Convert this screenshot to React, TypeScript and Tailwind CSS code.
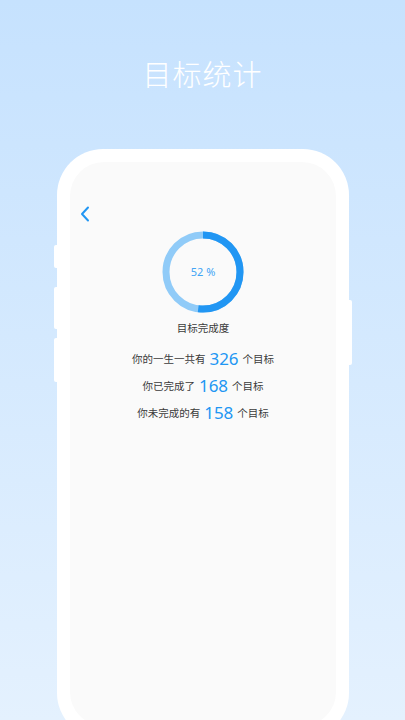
import React from "react";

const font = { fontFamily: '"Noto Sans CJK SC", "Noto Sans", sans-serif' };

function Ring({ pct }: { pct: number }) {
  const r = 37;
  const c = 2 * Math.PI * r;
  return (
    <svg width="88" height="88" viewBox="0 0 88 88">
      <circle cx="44" cy="44" r={r} fill="none" stroke="#90cbf8" strokeWidth="7" />
      <circle
        cx="44"
        cy="44"
        r={r}
        fill="none"
        stroke="#2196f3"
        strokeWidth="7"
        strokeDasharray={`${(c * pct) / 100} ${c}`}
        transform="rotate(-90 44 44)"
      />
    </svg>
  );
}

function Line({ pre, num }: { pre: string; num: string }) {
  return (
    <div className="flex items-center justify-center h-[27px] text-[10.5px] text-[#3a3a3a]">
      <span>{pre}</span>
      <span className="ml-[4px] mr-[4px] text-[17px] leading-none text-[#2196f3]" style={{ fontFamily: '"Noto Sans", sans-serif' }}>{num}</span>
      <span>个目标</span>
    </div>
  );
}

export default function App() {
  return (
    <div
      className="w-[405px] h-[720px] overflow-hidden bg-gradient-to-b from-[#c6e2fe] to-[#e4f1fe] flex flex-col"
      style={font}
    >
      <div className="h-[149px] shrink-0 flex justify-center pt-[51px]">
        <div className="text-[29px] leading-[44px] text-white font-light tracking-[1px]">目标统计</div>
      </div>
      <div className="relative ml-[57px] w-[292px] h-[590px] shrink-0 bg-white rounded-[46px] p-[13px]">
        <div className="absolute left-[-3px] top-[96px] w-[3px] h-[23px] bg-white rounded-l-[2px]" />
        <div className="absolute left-[-3px] top-[138px] w-[3px] h-[42px] bg-white rounded-l-[2px]" />
        <div className="absolute left-[-3px] top-[189px] w-[3px] h-[44px] bg-white rounded-l-[2px]" />
        <div className="absolute right-[-3px] top-[151px] w-[3px] h-[65px] bg-white rounded-r-[2px]" />
        <div className="w-full h-full bg-[#fafafa] rounded-[34px] flex flex-col">
          <div className="pt-[44px] pl-[10px] h-[70px]">
            <svg width="10" height="16" viewBox="0 0 10 16">
              <path d="M8 1.5 L2 8 L8 14.5" fill="none" stroke="#2196f3" strokeWidth="2" strokeLinecap="round" strokeLinejoin="round" />
            </svg>
          </div>
          <div className="flex justify-center mt-[-4px]">
            <div className="relative w-[88px] h-[88px]">
              <Ring pct={52} />
              <div className="absolute inset-0 flex items-center justify-center text-[11px] text-[#42a5f5]" style={{ fontFamily: '"Noto Sans", sans-serif' }}>
                52 %
              </div>
            </div>
          </div>
          <div className="text-center text-[10.5px] text-[#3a3a3a] mt-[4px] leading-[16px]">目标完成度</div>
          <div className="mt-[9px] flex flex-col">
            <Line pre="你的一生一共有" num="326" />
            <Line pre="你已完成了" num="168" />
            <Line pre="你未完成的有" num="158" />
          </div>
        </div>
      </div>
    </div>
  );
}
